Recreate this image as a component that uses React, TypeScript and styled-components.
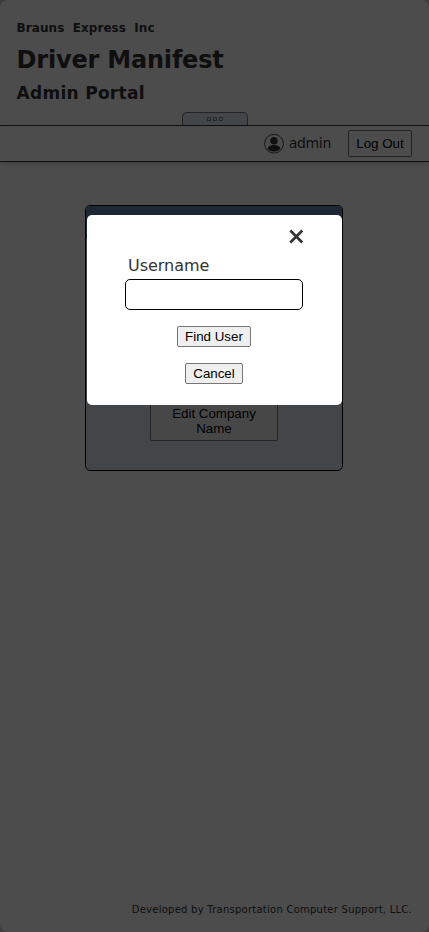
import React from "react";
import styled, { createGlobalStyle } from "styled-components";

const GlobalStyle = createGlobalStyle`
  * { box-sizing: border-box; }
  body { margin: 0; background: #d0d0d0; font-family: "DejaVu Sans", Verdana, sans-serif; color: #333; }
  h1, h2, h3, p { margin: 0; }
`;

const Page = styled.div`
  height: 932px;
  display: flex;
  flex-direction: column;
  background: #fff;
  border-radius: 8px;
  overflow: hidden;
`;
const Header = styled.header`
  position: relative;
  height: 125px;
  flex: none;
  padding: 20px 17px 0 16.6px;
`;
const Company = styled.h3`
  font: bold 12px/17px "DejaVu Sans", sans-serif;
  letter-spacing: 0.07px;
  word-spacing: 4px;
`;
const Title = styled.h1`
  margin-top: 8px;
  font: bold 24px/30px "DejaVu Sans", sans-serif;
  letter-spacing: -0.2px;
`;
const Subtitle = styled.h2`
  margin-top: 6px;
  font: bold 17px/24px "DejaVu Sans", sans-serif;
  letter-spacing: 0.28px;
`;
const Tab = styled.div`
  position: absolute;
  left: 182px;
  bottom: 0;
  width: 66px;
  height: 13px;
  display: flex;
  justify-content: center;
  gap: 2px;
  padding-top: 4px;
  border: 1px solid #777;
  border-bottom: 0;
  border-radius: 5px 5px 0 0;
  background: #dfecf5;
`;
const Dot = styled.i`
  width: 4px;
  height: 4px;
  border: 1px solid #888;
`;
const Nav = styled.nav`
  height: 37px;
  flex: none;
  display: flex;
  align-items: center;
  justify-content: flex-end;
  padding-right: 17px;
  border: solid #333;
  border-width: 1px 0;
  box-shadow: 0 2px 5px #d8d8d8;
`;
const UserName = styled.span`
  margin: -2px 17px 0 5px;
  font: 14px/20px "DejaVu Sans", sans-serif;
  letter-spacing: -0.3px;
`;
const Button = styled.button<{ $w: number; $h?: number }>`
  width: ${(p) => p.$w}px;
  height: ${(p) => p.$h ?? 21}px;
  padding: 0;
  border: 1px solid #767676;
  border-radius: 2px;
  background: #efefef;
  color: #000;
  font: 13.333px/15px "Liberation Sans", Arial, sans-serif;
`;
const LogOut = styled(Button)`
  background: #fff;
`;
const Main = styled.main`
  flex: 1;
  padding-top: 43px;
`;
const Card = styled.section`
  width: 258px;
  height: 266px;
  margin: 0 auto 0 85px;
  display: flex;
  flex-direction: column;
  align-items: center;
  border: 1px solid #000;
  border-radius: 5px;
  overflow: hidden;
  background: #dfecf5;
`;
const CardHead = styled.div`
  width: 100%;
  height: 32px;
  background: #6188b8;
  border-bottom: 1px solid #000;
`;
const EditButton = styled(Button)`
  margin: auto 0 29px;
  padding: 0 16px;
  flex: none;
`;
const Footer = styled.footer`
  height: 30px;
  padding-right: 17px;
  text-align: right;
  font: 10px/16px "DejaVu Sans", sans-serif;
  letter-spacing: 0.25px;
`;
const Overlay = styled.div`
  position: fixed;
  inset: 0;
  background: rgba(0, 0, 0, 0.7);
`;
const Dialog = styled.div`
  width: 255px;
  height: 190px;
  margin: 215px 0 0 87px;
  padding: 14px 39px 0 38px;
  display: flex;
  flex-direction: column;
  align-items: center;
  border-radius: 5px;
  background: #fff;
`;
const Close = styled.button`
  align-self: flex-end;
  width: 16px;
  height: 16px;
  margin-right: -1px;
  padding: 0;
  border: 0;
  background: none;
  display: flex;
  color: #333;
`;
const Label = styled.label`
  align-self: flex-start;
  margin: 11px 0 3px 3px;
  font: 16px/20px "DejaVu Sans", sans-serif;
  letter-spacing: -0.02px;
`;
const Input = styled.input`
  width: 178px;
  height: 31px;
  flex: none;
  margin-bottom: 16px;
  border: 1px solid #000;
  border-radius: 5px;
  background: #fff;
`;
const Find = styled(Button)`
  margin-bottom: 16px;
`;

export default function App() {
  return (
    <>
      <GlobalStyle />
      <Page>
        <Header>
          <Company>Brauns Express Inc</Company>
          <Title>Driver Manifest</Title>
          <Subtitle>Admin Portal</Subtitle>
          <Tab><Dot /><Dot /><Dot /></Tab>
        </Header>
        <Nav>
          <svg width="20" height="20" viewBox="0 0 20 20" fill="#333">
            <circle cx="10" cy="9.7" r="9.4" fill="none" stroke="#333" strokeWidth="0.9" />
            <circle cx="10" cy="6.8" r="3.7" />
            <ellipse cx="10" cy="14.3" rx="6.2" ry="3.2" />
          </svg>
          <UserName>admin</UserName>
          <LogOut $w={64} $h={27}>Log Out</LogOut>
        </Nav>
        <Main>
          <Card>
            <CardHead />
            <EditButton $w={128} $h={40}>Edit Company Name</EditButton>
          </Card>
        </Main>
        <Footer>Developed by Transportation Computer Support, LLC.</Footer>
      </Page>
      <Overlay>
        <Dialog role="dialog">
          <Close aria-label="Close">
            <svg width="16" height="16" viewBox="0 0 16 16" stroke="currentColor" strokeWidth="2.6">
              <path d="M2.3 1.5L14.3 13.5M14.3 1.5L2.3 13.5" />
            </svg>
          </Close>
          <Label htmlFor="username">Username</Label>
          <Input id="username" />
          <Find $w={74}>Find User</Find>
          <Button $w={58}>Cancel</Button>
        </Dialog>
      </Overlay>
    </>
  );
}
